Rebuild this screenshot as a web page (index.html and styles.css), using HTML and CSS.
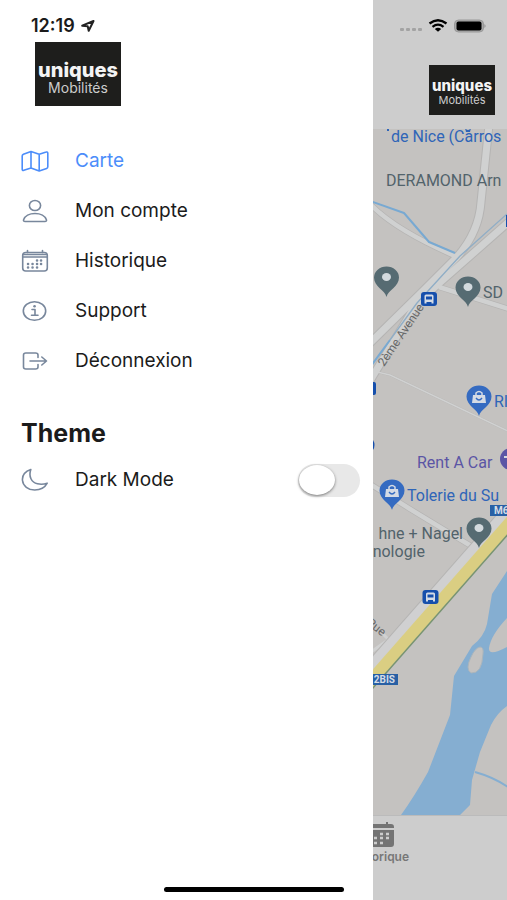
FILE: index.html
```html
<!DOCTYPE html>
<html lang="fr">
<head>
<meta charset="utf-8">
<meta name="viewport" content="width=device-width, initial-scale=1">
<title>uniques Mobilités</title>
<link rel="stylesheet" href="styles.css">
</head>
<body>
<aside class="menu">
  <div class="status">
    <span>12:19</span>
    <svg class="locate" width="14" height="12" viewBox="0 0 14 12" aria-hidden="true"><path d="M1.2 5.7 12.5 1 7.7 10.8 6.7 6.3Z"/></svg>
  </div>
  <div class="logo"><strong>uniques</strong><span>Mobilités</span></div>
  <nav class="links">
    <a class="row active" href="#carte">
      <svg class="icon" stroke-width="1.6" viewBox="0 0 28 24" aria-hidden="true"><path d="M10 2.5 2.400 5.300Q1.200 5.800 1.200 7v13.200q0 1.700 1.600 1.100L10 19l8.200 3 7.400-2.600q1.200-.5 1.200-1.700V4.200q0-1.700-1.600-1.100L18.200 5.200ZM10 2.500V19M18.200 5.200V22"/></svg>
      <span>Carte</span>
    </a>
    <a class="row" href="#compte">
      <svg class="icon" stroke-width="1.6" viewBox="0 0 28 24" aria-hidden="true"><ellipse cx="14" cy="6.500" rx="5.600" ry="5"/><path d="M14 14.500c-5.500 0-10.200 2.500-11.400 6.200-.4 1.200.3 1.800 1.500 1.800h19.800c1.200 0 1.900-.6 1.500-1.800C24.200 17 19.500 14.500 14 14.500Z"/></svg>
      <span>Mon compte</span>
    </a>
    <a class="row" href="#historique">
      <svg class="icon" stroke-width="1.6" viewBox="0 0 28 24" aria-hidden="true"><rect x="1.700" y="3.500" width="24.600" height="18.500" rx="3"/><path d="M2 5.500h24M2 8h24M6.500 1.500v2M21.500 1.500v2"/><path stroke-width="2.500" d="M16 11.500h.1M20 11.500h.1M16 15h.1M20 15h.1M11.500 15h.1M7 15h.1M7 18.500h.1M11.500 18.500h.1M16 18.500h.1"/></svg>
      <span>Historique</span>
    </a>
    <a class="row" href="#support">
      <svg class="icon" stroke-width="1.6" viewBox="0 0 28 24" aria-hidden="true"><ellipse cx="13.500" cy="12" rx="11.200" ry="9.300"/><path d="M11 10.500h3V16M10.500 16.200h6.500"/><path stroke-width="2.500" d="M13.500 7.200h.1"/></svg>
      <span>Support</span>
    </a>
    <a class="row" href="#deconnexion">
      <svg class="icon" stroke-width="1.6" viewBox="0 0 28 24" aria-hidden="true"><path d="M17 8.500V6q0-2-2.400-2H4.900Q2.500 4 2.500 6v12q0 2 2.400 2h9.700q2.400 0 2.400-2v-2.500M9 12h16.500M20.800 8l4.700 4-4.700 4"/></svg>
      <span>Déconnexion</span>
    </a>
  </nav>
  <h2>Theme</h2>
  <label class="row">
    <svg class="icon" stroke-width="1.6" viewBox="0 0 28 24" aria-hidden="true"><path d="M9.800 1.500C3.800 3.600 1 7.600 1.500 12.500c.6 5.500 5.500 9.500 12.200 9.500 5.600 0 10.300-2.600 12.500-6.800-3.200 1.100-6.600 1.300-9.700.6C10.400 14.400 7.400 8.500 9.800 1.500Z"/></svg>
    <span>Dark Mode</span>
    <input class="toggle" type="checkbox" role="switch">
  </label>
</aside>

<main class="page">
  <header class="top">
    <svg class="signals" width="86" height="16" viewBox="0 0 86 16" aria-hidden="true">
      <g fill="#a3a3a3"><rect y="10" width="4" height="3" rx="1"/><rect x="6" y="10" width="4" height="3" rx="1"/><rect x="12" y="10" width="4" height="3" rx="1"/><rect x="18" y="10" width="4" height="3" rx="1"/></g>
      <g fill="none" stroke="#000" stroke-width="2.300"><path d="M29.500 5.500q8.500-6.500 17 0M32.500 8.800q5.500-4.300 11 0"/></g>
      <path d="M34.800 11q3.200-2.300 6.400 0L38 13.800Z"/>
      <rect x="54.500" y="2" width="29" height="12" rx="4" fill="#aaa" stroke="#999"/><rect x="56.500" y="3.500" width="25" height="9" rx="2"/><path d="M84.500 6q2 2 0 4" fill="#888"/>
    </svg>
    <div class="logo small"><strong>uniques</strong><span>Mobilités</span></div>
  </header>
  <svg class="map" viewBox="373 129 134 686" preserveAspectRatio="xMidYMid slice" role="img" aria-label="Carte">
    <defs>
      <path id="pin" d="M0 16C-1.500 9-12.500 6-12.500-3.500A12.500 11 0 0 1 12.500-3.500C12.500 6 1.500 9 0 16Z"/>
      <g id="bag"><path d="M-6-5H6L7 3H-7Z" fill="#d5dbe5"/><path d="M-3-5v-2q3-3 6 0v2" fill="none" stroke="#d5dbe5" stroke-width="1.500"/><path d="M-3-2q3 4 6 0" fill="none" stroke="#356bc1" stroke-width="1.300"/></g>
      <g id="bus"><rect x="-8" y="-7" width="16" height="14" rx="3" fill="#164fac"/><path d="M-4.500 4.500V-3q0-1.500 1.500-1.500h6q1.500 0 1.500 1.500v7.500h-2V3h-5v1.500Z" fill="#d4dbe6"/><path d="M-3-2.500h6v3h-6Z" fill="#164fac"/></g>
    </defs>
    <path d="M373 129h134v686H373Z" fill="#c4c2c0"/>
    <g fill="none" stroke-linejoin="round">
      <g stroke="#b5b4b3">
        <path stroke-width="9" d="M489 125 481 202Q479 232 457 257L424 290 368 345M512 219 444 279 417 303 368 384"/>
        <path stroke-width="6" d="M370 204Q395 230 455 256M439 287 512 310M370 484 410 509 476 549"/>
        <path stroke-width="2" d="M373 371 390 375 512 433M391 638 475 548"/>
      </g>
      <g stroke="#d0d1d1">
        <path stroke-width="7" d="M489 125 481 202Q479 232 457 257L424 290 368 345M512 219 444 279 417 303 368 384"/>
        <path stroke-width="4.500" d="M370 204Q395 230 455 256M439 287 512 310M370 484 410 509 476 549"/>
        <path stroke-width="1.400" d="M373 371 390 375 512 433"/>
        <path stroke-width="3" d="M382 633 391 642M371 652 388 640"/>
      </g>
      <path d="M370 201 404 213 429 242 455 253M390 340 371 366" stroke="#78a9d2" stroke-width="2"/>
      <path d="M507 214 460 256 417 303 390 340" stroke="#8fadc6" stroke-width="1.300"/>
      <path d="M353 688 513 506" stroke="#b5b4b3" stroke-width="14"/>
      <path d="M353 688 513 506" stroke="#d0d0d1" stroke-width="12"/>
      <path d="M360 693 520 511" stroke="#dace82" stroke-width="12"/>
      <path d="M365 697 525 515" stroke="#789471" stroke-width="1.500"/>
    </g>
    <path d="M507 571 492 594 487 624Q484 637 472 646L454 676 450 715 428 772Q414 797 401 815H460L470 805 472 780 480 752 491 725Q497 713 507 706V647Q488 657 489 648 491 635 507 618Z" fill="#85aed1"/>
    <path d="M480 647q4 0 3 7-1 20-12 19-6-4 0-16 4-9 9-10Z" fill="#c4c2c0" stroke="#a9b5bd"/>
    <path d="M475 772Q493 777 508 787" fill="none" stroke="#85aed1" stroke-width="2"/>
    <g class="places">
      <g fill="#2f65b8"><path d="M387 128h2v3h-2M465 128q3 4 6 0l-1 4h-4Z"/><text x="391" y="142">de Nice (Carros</text><text x="494" y="407">RI</text><text x="407" y="501">Tolerie du Su</text></g>
      <g fill="#52636b"><text x="386" y="186">DERAMOND Arn</text><text x="483" y="298">SD</text><text x="463" y="539" text-anchor="end">hne + Nagel</text><text x="425" y="557" text-anchor="end">nologie</text></g>
      <text x="417" y="468" fill="#5b55a5">Rent A Car</text>
    </g>
    <g class="street"><text transform="translate(384 367) rotate(-56)">2ème Avenue</text><text transform="translate(366 624) rotate(38)">Rue</text></g>
    <g fill="#566b72"><use href="#pin" x="386.500" y="281"/><use href="#pin" x="468" y="291"/><use href="#pin" x="479" y="532"/></g>
    <g fill="#d3dade"><ellipse cx="386.500" cy="277" rx="4.500" ry="4"/><ellipse cx="468" cy="287" rx="4.500" ry="4"/><ellipse cx="479" cy="528" rx="4.500" ry="4"/></g>
    <g fill="#356bc1"><use href="#pin" x="479" y="400"/><use href="#pin" x="392" y="494"/></g>
    <use href="#bag" x="479" y="400"/><use href="#bag" x="392" y="494"/>
    <ellipse cx="511" cy="459" rx="11" ry="11" fill="#5b55a5"/><path d="M504 456h4v2h-4" fill="#d3dade"/>
    <use href="#bus" x="429" y="299"/><use href="#bus" x="430.500" y="597"/>
    <path d="M373 382h1q2 0 2 2v9q0 2-2 2h-1ZM373 440q3 5 0 10M507 215v12h-1v-12Z" fill="#164fac"/>
    <path d="M490 505h20v11h-20ZM370 674h28v11h-28Z" fill="#2860a5"/>
    <g class="badge"><text x="494" y="514">M6</text><text x="395" y="683" text-anchor="end">2BIS</text></g>
  </svg>
  <footer class="tabs">
    <a class="tab" href="#historique">
      <svg width="32" height="27" viewBox="0 0 32 27" aria-hidden="true"><path d="M1 6q0-3 3-3h3V1h2v2h14V1h2v2h3q3 0 3 3v1H1ZM1 9h30v14q0 3-3 3H4q-3 0-3-3Z" fill="#747474"/><path d="M17 13h3M23 13h3M5 17h3M11 17h3M17 17h3M23 17h3M5 22h3M11 22h3M17 22h3" stroke="#cdcdcd" stroke-width="2.500"/></svg>
      <span>Historique</span>
    </a>
  </footer>
</main>
<div class="home"></div>
</body>
</html>
```
FILE: styles.css
```css
* { box-sizing: border-box; }

body {
  margin: 0;
  min-height: 100vh;
  display: grid;
  grid-template-columns: minmax(0, 1fr) 134px;
  position: relative;
  overflow: hidden;
  background: #fff;
  color: #1b1b1b;
  font-family: Inter, "Liberation Sans", sans-serif;
}

a { color: inherit; text-decoration: none; }

.status {
  height: 42px;
  display: flex;
  align-items: center;
  gap: 6px;
  padding: 9px 0 0 31px;
  font-size: 18px;
  line-height: 24px;
  font-weight: 600;
}

.locate { fill: none; stroke: #222; stroke-width: 2; stroke-linejoin: round; }

.logo {
  width: 86px;
  height: 64px;
  margin-left: 35px;
  padding-top: 9px;
  display: flex;
  flex-direction: column;
  align-items: center;
  justify-content: center;
  background: #1e1e1c;
  color: #f4f4f4;
  font-size: 14px;
  line-height: 18px;
}

.logo strong { font-size: 20px; font-weight: 800; }
.logo span { color: #ccc; }

.logo.small {
  width: 66px;
  height: 50px;
  margin: 0 12px 0 auto;
  padding-top: 5px;
  font-size: 11px;
  line-height: 14px;
}

.logo.small strong { font-size: 15px; }

.links { margin-top: 30px; }

.row {
  height: 50px;
  display: flex;
  align-items: center;
  gap: 26px;
  padding: 0 13px 0 21px;
  font-size: 19px;
  line-height: 24px;
}

.icon {
  width: 28px;
  height: 24px;
  fill: none;
  stroke: #78879c;
  stroke-linecap: round;
  stroke-linejoin: round;
}

.active { color: #4c8dfa; }
.active .icon { stroke: #4c8dfa; }

h2 {
  margin: 33px 0 8px 21px;
  font-size: 25px;
  line-height: 28px;
  font-weight: 700;
}

.toggle {
  appearance: none;
  width: 62px;
  height: 33px;
  margin: 0 0 0 auto;
  padding: 1px;
  border-radius: 17px;
  background: #e8e8e8;
}

.toggle::before {
  content: "";
  display: block;
  width: 36px;
  height: 30px;
  border-radius: 50%;
  background: #fff;
  box-shadow: 0 1px 3px #777;
}

.toggle:checked { background: #4c8dfa; }
.toggle:checked::before { margin-left: auto; }

.page {
  min-width: 0;
  height: 100vh;
  display: flex;
  flex-direction: column;
  background: #cdcdcd;
}

.top { height: 129px; padding-top: 18px; }
.signals { display: block; margin: 0 0 31px 27px; }

.map { display: block; width: 100%; flex: 1; min-height: 0; }
.places { font: 400 16px Roboto, sans-serif; }
.street { font: 12px Roboto, sans-serif; fill: #666; }
.badge { font: 700 10px Roboto, sans-serif; fill: #d5dce5; }

.tabs {
  height: 85px;
  display: flex;
  justify-content: flex-start;
  padding-top: 5px;
  border-top: 1px solid #bbb;
  overflow: hidden;
}

.tab {
  display: flex;
  flex-direction: column;
  align-items: center;
  margin-left: -24px;
  color: #777;
  font-size: 12px;
  line-height: 18px;
  font-weight: 600;
}

.home {
  position: absolute;
  bottom: 8px;
  left: 50%;
  width: 180px;
  height: 5px;
  border-radius: 3px;
  background: #000;
  transform: translateX(-50%);
}
```
